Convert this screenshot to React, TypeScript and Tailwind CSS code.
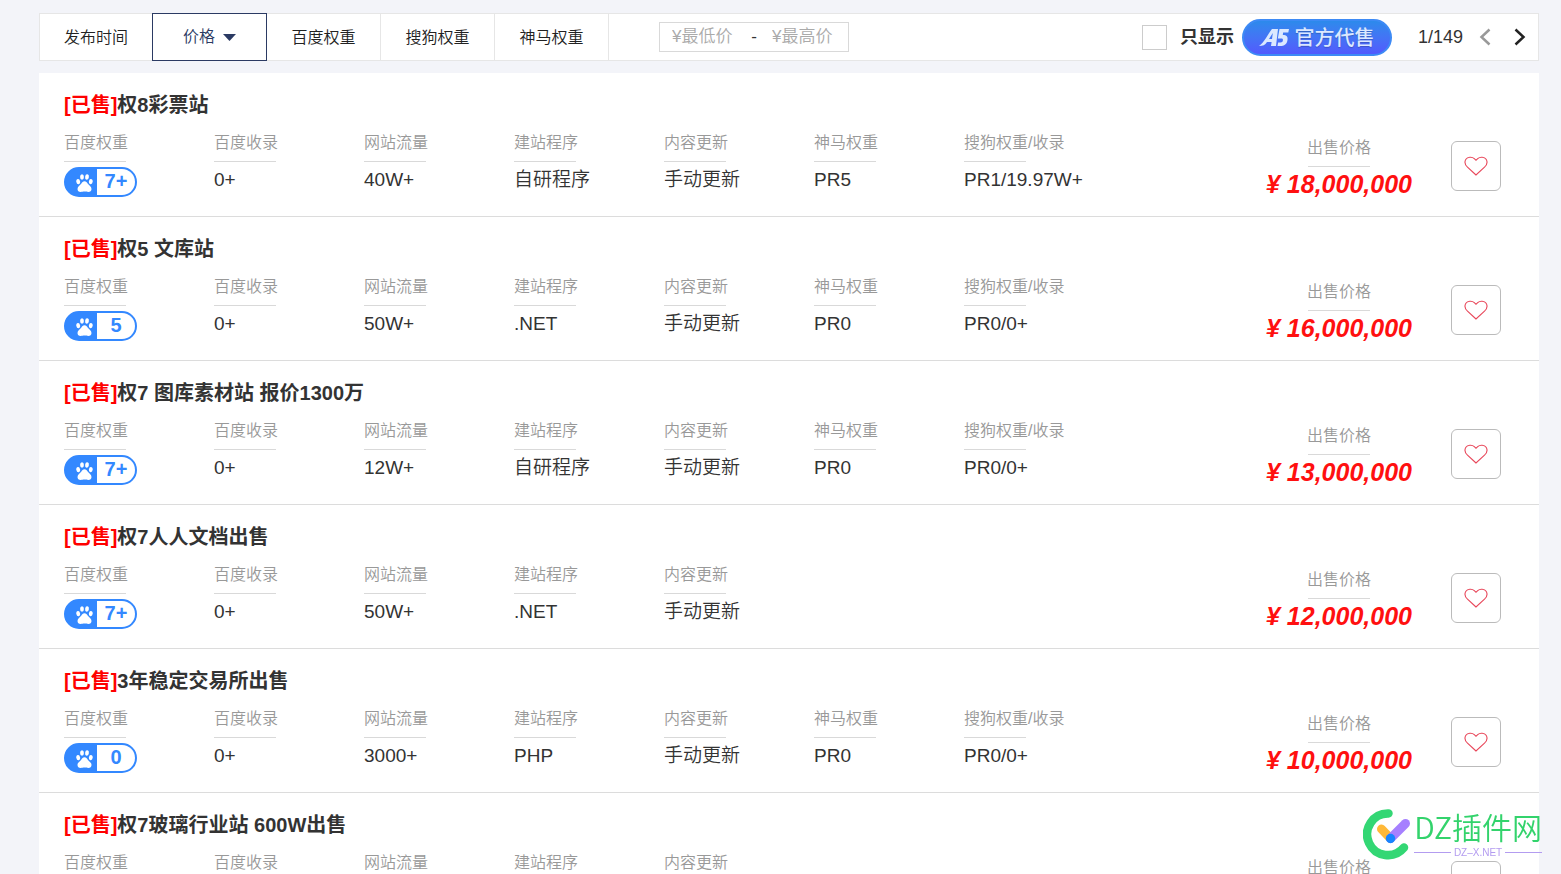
type Site = {
  title: string;
  weight: string;
  cells: [string, string][];
  price: string;
};

function cells(traffic: string, program: string, shenma?: string, sogou?: string): [string, string][] {
  const list: [string, string][] = [
    ["百度收录", "0+"],
    ["网站流量", traffic],
    ["建站程序", program],
    ["内容更新", "手动更新"],
  ];
  if (shenma) list.push(["神马权重", shenma]);
  if (sogou) list.push(["搜狗权重/收录", sogou]);
  return list;
}

const sites: Site[] = [
  { title: "权8彩票站", weight: "7+", cells: cells("40W+", "自研程序", "PR5", "PR1/19.97W+"), price: "18,000,000" },
  { title: "权5 文库站", weight: "5", cells: cells("50W+", ".NET", "PR0", "PR0/0+"), price: "16,000,000" },
  { title: "权7 图库素材站 报价1300万", weight: "7+", cells: cells("12W+", "自研程序", "PR0", "PR0/0+"), price: "13,000,000" },
  { title: "权7人人文档出售", weight: "7+", cells: cells("50W+", ".NET"), price: "12,000,000" },
  { title: "3年稳定交易所出售", weight: "0", cells: cells("3000+", "PHP", "PR0", "PR0/0+"), price: "10,000,000" },
  { title: "权7玻璃行业站 600W出售", weight: "7+", cells: cells("50W+", "PHP"), price: "6,000,000" },
];

function FieldLabel({ children }: { children: string }) {
  return (
    <>
      <dt className="whitespace-nowrap pb-[6px] text-base leading-6 font-[350] text-[#999]">{children}</dt>
      <div aria-hidden="true" className="h-px w-[62px] bg-[#d9d9d9]" />
    </>
  );
}

function Paw() {
  return (
    <svg width="17" height="18" viewBox="0 0 17 18" fill="currentColor" aria-hidden="true">
      <ellipse cx="2.200" cy="7.600" rx="1.900" ry="2.600" transform="rotate(-12 2.200 7.600)" />
      <ellipse cx="6" cy="3" rx="1.900" ry="2.700" />
      <ellipse cx="11" cy="3" rx="1.900" ry="2.700" transform="rotate(8 11 3)" />
      <ellipse cx="14.800" cy="7.600" rx="1.900" ry="2.600" transform="rotate(8 14.800 7.600)" />
      <path d="M8.500 7.300c1.600 0 2.400 1.200 3.300 2.400 1 1.300 3.700 2.900 3.700 5.200 0 1.800-1.300 3-3.200 3-1.300 0-2.300-.4-3.800-.4s-2.500.4-3.800.4c-1.900 0-3.200-1.200-3.200-3 0-2.300 2.700-3.900 3.700-5.200.9-1.200 1.700-2.400 3.300-2.400Z" />
    </svg>
  );
}

function WeightBadge({ value }: { value: string }) {
  return (
    <span className="flex h-[30px] w-[73px] overflow-hidden rounded-full border-2 border-[#3388ff] bg-[#3388ff]">
      <span className="flex w-[31px] items-center justify-end pt-px pr-1 text-white">
        <Paw />
      </span>
      <span className="flex-1 bg-white text-center text-xl leading-6 font-bold text-[#3388ff]">{value}</span>
    </span>
  );
}

function SiteRow({ site }: { site: Site }) {
  return (
    <li className="flex items-start border-b border-[#dcdcdc] pr-[38px] pb-[18px] pl-[25px]">
      <div className="min-w-0 flex-1 pt-[17px]">
        <h2 className="text-xl leading-[30px] font-bold text-[#333]">
          <span className="text-[#ff0000]">[已售]</span>
          {site.title}
        </h2>
        <dl className="mt-[11px] flex">
          <div className="w-[150px]">
            <FieldLabel>百度权重</FieldLabel>
            <dd className="mt-[5px]">
              <WeightBadge value={site.weight} />
            </dd>
          </div>
          {site.cells.map(([label, value]) => (
            <div key={label} className="w-[150px]">
              <FieldLabel>{label}</FieldLabel>
              <dd className="mt-1 text-[19px] leading-7 font-[350] whitespace-nowrap text-[#333]">{value}</dd>
            </div>
          ))}
        </dl>
      </div>
      <dl className="flex w-[200px] flex-col items-center pt-[63px]">
        <FieldLabel>出售价格</FieldLabel>
        <dd className="mt-[3px] text-[25px] leading-7 font-bold whitespace-nowrap text-[#ff1010] italic">
          ¥ {site.price}
        </dd>
      </dl>
      <button
        type="button"
        aria-label="收藏"
        className="mt-[68px] ml-3 flex size-[50px] items-center justify-center rounded-md border border-[#bbb] bg-white"
      >
        <svg width="24" height="20" viewBox="0 0 24 20" fill="none" stroke="#e8475a" strokeWidth="1.100">
          <path d="M12 19 3.500 11.200C.8 8.600.5 5.500 1.900 3.300 3.400.9 8 .4 10.300 2.600L12 4.300l1.700-1.700C16 .4 20.600.9 22.100 3.300c1.400 2.200 1.100 5.300-1.600 7.900Z" />
        </svg>
      </button>
    </li>
  );
}

function Tab({ children }: { children: string }) {
  return (
    <button type="button" className="h-full w-[114px] border-r border-[#e6e6e6] pt-px text-base font-[350] text-[#222]">
      {children}
    </button>
  );
}

function FilterBar() {
  return (
    <div className="flex h-12 items-center border border-[#e6e6e6] bg-white">
      <div className="flex h-12 items-stretch">
        <button type="button" className="w-28 pt-px text-base font-[350] text-[#222]">
          发布时间
        </button>
        <button
          type="button"
          className="flex w-[115px] items-center justify-center gap-2 border border-[#2b3a63] text-base font-[350] text-[#2b3a63]"
        >
          价格
          <svg width="13" height="7" viewBox="0 0 13 7" fill="#2b3a63">
            <path d="M0 0h13L6.500 7z" />
          </svg>
        </button>
        <Tab>百度权重</Tab>
        <Tab>搜狗权重</Tab>
        <Tab>神马权重</Tab>
      </div>
      <div className="ml-[50px] flex h-[30px] w-[190px] items-center border border-[#d9d9d9] text-[17px] text-[#333]">
        <input
          aria-label="最低价"
          placeholder="¥最低价"
          className="h-full w-[88px] pl-3 font-[350] outline-none placeholder:text-[#aaa]"
        />
        <span className="w-3 text-center">-</span>
        <input
          aria-label="最高价"
          placeholder="¥最高价"
          className="h-full w-[88px] pl-3 font-[350] outline-none placeholder:text-[#aaa]"
        />
      </div>
      <label className="ml-auto flex items-center text-lg leading-6 font-bold text-[#333]">
        <input type="checkbox" className="mr-[13px] size-[25px] appearance-none border border-[#ccc] bg-white" />
        只显示
        <span className="ml-2 flex h-[37px] w-[150px] items-center justify-center gap-[5px] rounded-full border-2 border-[#3d8af5] bg-linear-to-b from-[#2c8aec] to-[#5259fd] text-[#dbe8ff]">
          <svg width="30" height="19" viewBox="0 0 30 19" fill="#dbe8ff" aria-label="A5">
            <path d="M0 18C5 15 9 6 13 1h6l-2 17h-5l.6-4H8c-2 3-4 4-8 4Zm10-7h3l.8-6Z" fillRule="evenodd" />
            <path d="M20.500 1H30l-.7 3.500h-5.200L23.800 7c4 0 5.200 1.500 4.700 5-.6 4-3 6-7.500 6h-2.500l.6-3.500h2.300c1.700 0 2.300-.8 2.500-2.200.2-1.300-.3-1.800-1.700-1.800h-3.400Z" />
          </svg>
          <span className="pt-px text-xl leading-6 font-medium text-shadow-xs">官方代售</span>
        </span>
      </label>
      <span className="ml-[26px] text-lg leading-6 text-[#333]">1/149</span>
      <button type="button" aria-label="上一页" className="ml-4 text-[#999]">
        <svg width="12" height="18" viewBox="0 0 12 18" fill="none" stroke="currentColor" strokeWidth="2.500">
          <path d="M10.500 1.500 2.500 9l8 7.500" />
        </svg>
      </button>
      <button type="button" aria-label="下一页" className="mr-3 ml-[23px] text-[#222]">
        <svg width="12" height="18" viewBox="0 0 12 18" fill="none" stroke="currentColor" strokeWidth="2.500">
          <path d="m1.500 1.500 8 7.500-8 7.500" />
        </svg>
      </button>
    </div>
  );
}

function Watermark() {
  return (
    <div className="pointer-events-none fixed right-[19px] bottom-[14px] flex items-center gap-[3px]">
      <svg width="48" height="52" viewBox="0 0 48 52" fill="none" strokeLinecap="round">
        <path d="M25.500 5.500A20.800 20.800 0 1 0 41 39.500" stroke="#33d774" strokeWidth="8.500" />
        <path d="m18.500 21 9 9.500" stroke="#ffb938" strokeWidth="9" />
        <path d="m27.500 30.500 15-15" stroke="#a680ff" strokeWidth="9" />
        <circle cx="27.500" cy="30.500" r="4.700" fill="#1785ff" />
      </svg>
      <div>
        <div className="pb-[7px] font-['Noto_Sans_CJK_SC',sans-serif] text-[30px] leading-[30px] font-[350] whitespace-nowrap text-[#33d36c]">
          DZ插件网
        </div>
        <div className="flex items-center gap-[3px] text-[10px] leading-[10px] text-[#b39cf0]">
          <span className="h-px flex-1 bg-[#b39cf0]" />
          DZ–X.NET
          <span className="h-px flex-1 bg-[#b39cf0]" />
        </div>
      </div>
    </div>
  );
}

export default function App() {
  return (
    <main className="h-screen overflow-hidden bg-[#f3f4f9] pt-[13px] pr-[22px] pl-[39px] font-['Liberation_Sans','Noto_Sans_CJK_SC',sans-serif]">
      <FilterBar />
      <ul className="mt-3 bg-white">
        {sites.map((site) => (
          <SiteRow key={site.title} site={site} />
        ))}
      </ul>
      <Watermark />
    </main>
  );
}
